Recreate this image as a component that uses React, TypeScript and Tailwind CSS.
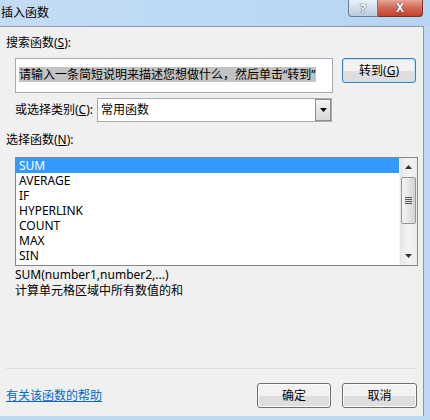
import React from "react";

const F = "font-['Segoe_UI','Noto_Sans','Noto_Sans_CJK_SC',sans-serif]";

function WinButton({ children, focused = false }: { children: React.ReactNode; focused?: boolean }) {
  return (
    <div
      className={`h-[25px] rounded-[3px] border ${focused ? "border-[#3c7fb1]" : "border-[#707070]"} p-[1px] ${focused ? "bg-[#bfe3f8]" : "bg-[#fbfbfb]"}`}
    >
      <div className="h-full w-full rounded-[2px] flex flex-col overflow-hidden relative">
        <div className="h-1/2 bg-[#f2f2f2]" />
        <div className="h-1/2 bg-[#dedede]" />
        <div className="absolute inset-0 flex items-center justify-center text-[12px] leading-[14px] text-black">
          {children}
        </div>
      </div>
    </div>
  );
}

export default function App() {
  const items = ["SUM", "AVERAGE", "IF", "HYPERLINK", "COUNT", "MAX", "SIN"];
  return (
    <div className={`w-[430px] h-[420px] overflow-hidden bg-[#bdd8f3] flex flex-col ${F} text-black`}>
      {/* title bar */}
      <div className="h-[26px] shrink-0 flex items-start bg-gradient-to-r from-[#c4dcf3] via-[#bcd9f6] to-[#b7d4f2]">
        <span className="mt-[6px] ml-[1px] text-[12px] leading-[13px] text-black">插入函数</span>
        <div className="ml-auto mr-[7px] flex h-[17px]">
          <div className="w-[30px] h-[17px] rounded-bl-[4px] border border-t-0 border-[#6d7f95] bg-gradient-to-b from-[#e9f0f8] to-[#b9cde3] flex items-center justify-center">
            <span className="text-[13px] leading-[16px] font-bold text-white [text-shadow:0_0_1px_#333,0_0_1px_#333]">?</span>
          </div>
          <div className="w-[45px] h-[17px] rounded-br-[4px] border border-t-0 border-l-0 border-[#7a3328] bg-gradient-to-b from-[#e8a597] via-[#d16752] to-[#c4412c] flex items-center justify-center">
            <span className="text-[12px] leading-[16px] font-bold text-white [text-shadow:0_0_1px_#333,0_0_1px_#333]">X</span>
          </div>
        </div>
      </div>
      {/* client */}
      <div className="flex shrink-0">
        <div className="w-[424px] h-[390px] border-t border-r border-[#8a98a8] bg-[#f0f0f0] flex flex-col">
          <div className="mt-[8px] ml-[6px] text-[12px] leading-[16px]">
            搜索函数(<span className="underline">S</span>):
          </div>
          <div className="mt-[7px] ml-[15px] flex items-start">
            <div className="w-[318px] h-[35px] border border-[#a5acb5] bg-white pt-[2px] pl-[3px]">
              <span className="bg-[#c3c3c3] text-[12px] leading-[15px] inline-block">
                请输入一条简短说明来描述您想做什么，然后单击“转到”
              </span>
            </div>
            <div className="ml-[9px] w-[74px]">
              <WinButton focused>
                转到(<span className="underline">G</span>)
              </WinButton>
            </div>
          </div>
          <div className="mt-[5px] ml-[15px] flex items-center h-[24px]">
            <span className="w-[82px] text-[12px] leading-[16px]">
              或选择类别(<span className="underline">C</span>):
            </span>
            <div className="w-[235px] h-[24px] border border-[#a5acb5] bg-white flex items-center">
              <span className="ml-[3px] text-[12px] leading-[16px] flex-1">常用函数</span>
              <div className="w-[16px] h-[22px] bg-gradient-to-b from-[#f3f3f3] to-[#d9d9d9] flex items-center justify-center border border-[#8d8d8d]">
                <svg width="7" height="4" viewBox="0 0 7 4">
                  <path d="M0 0h7L3.5 4z" fill="#000" />
                </svg>
              </div>
            </div>
          </div>
          <div className="mt-[10px] ml-[6px] text-[12px] leading-[16px]">
            选择函数(<span className="underline">N</span>):
          </div>
          <div className="mt-[9px] ml-[15px] w-[403px] h-[109px] border border-[#828790] bg-white flex">
            <div className="flex-1 flex flex-col">
              {items.map((it, i) => (
                <div
                  key={it}
                  className={`h-[15px] pl-[3px] text-[12px] leading-[15px] ${i === 0 ? "bg-[#3399ff] text-white" : ""}`}
                >
                  {it}
                </div>
              ))}
            </div>
            <div className="w-[18px] h-full bg-gradient-to-r from-[#e6e6e6] via-[#f4f4f4] to-[#ececec] flex flex-col items-center border-l border-[#f4f4f4]">
              <div className="h-[18px] flex items-center justify-center">
                <svg width="7" height="4" viewBox="0 0 7 4">
                  <path d="M0 4h7L3.5 0z" fill="#333" />
                </svg>
              </div>
              <div className="mt-[1px] w-[15px] h-[47px] rounded-[2px] border border-[#979797] bg-gradient-to-r from-[#f4f4f4] via-[#e6e6e6] to-[#d2d2d2] flex flex-col items-center justify-center gap-[1px]">
                <div className="w-[7px] h-[1px] bg-[#555]" />
                <div className="w-[7px] h-[1px] bg-[#555]" />
                <div className="w-[7px] h-[1px] bg-[#555]" />
                <div className="w-[7px] h-[1px] bg-[#555]" />
              </div>
              <div className="mt-auto h-[18px] flex items-center justify-center">
                <svg width="7" height="4" viewBox="0 0 7 4">
                  <path d="M0 0h7L3.5 4z" fill="#333" />
                </svg>
              </div>
            </div>
          </div>
          <div className="mt-[1px] ml-[15px] text-[12px] leading-[16px]">SUM(number1,number2,...)</div>
          <div className="ml-[15px] text-[12px] leading-[16px]">计算单元格区域中所有数值的和</div>
          <div className="mt-[69px] ml-[6px] w-[411px] h-[1px] bg-[#d5dfe5]" />
          <div className="mt-[14px] flex items-center h-[25px]">
            <a className="ml-[6px] text-[12px] leading-[16px] text-[#0066cc] underline cursor-pointer">有关该函数的帮助</a>
            <div className="ml-auto mr-[6px] flex gap-[11px]">
              <div className="w-[74px]">
                <WinButton>确定</WinButton>
              </div>
              <div className="w-[75px]">
                <WinButton>取消</WinButton>
              </div>
            </div>
          </div>
        </div>
      </div>
    </div>
  );
}
